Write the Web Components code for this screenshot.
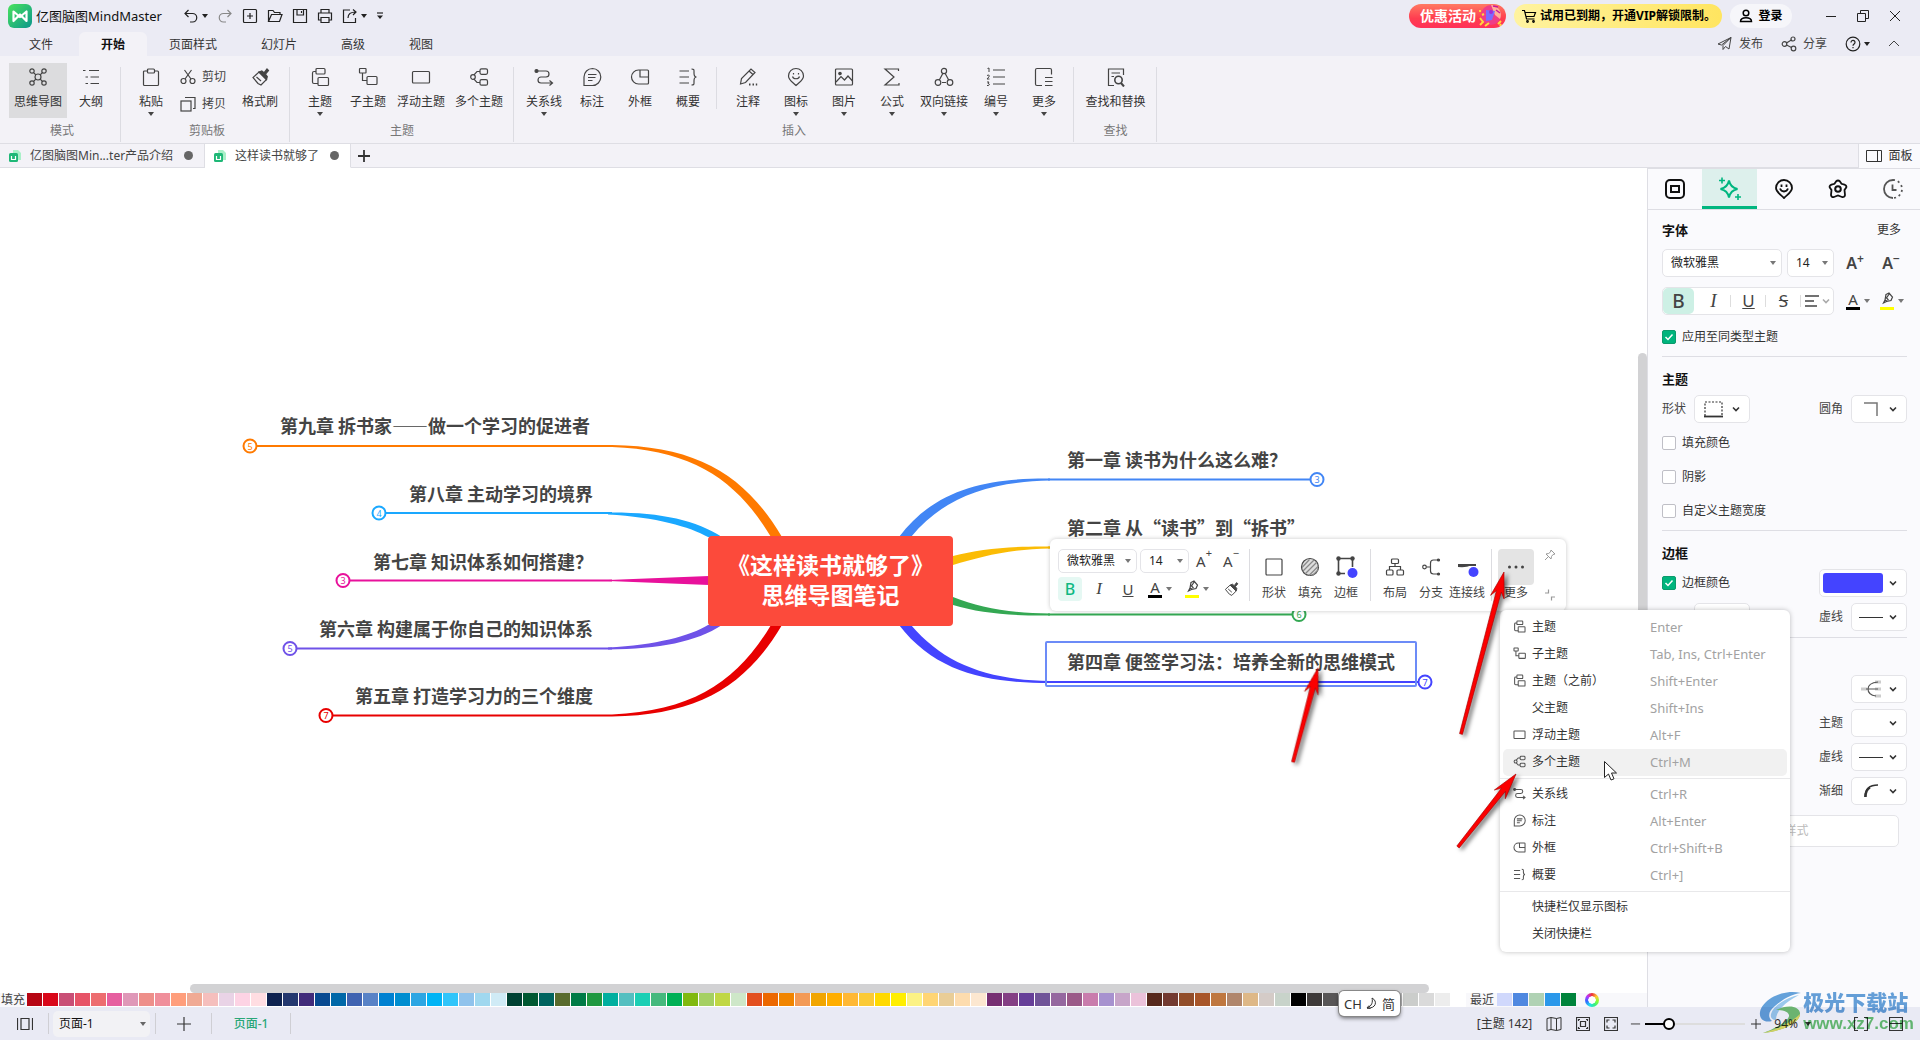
<!DOCTYPE html>
<html lang="zh-CN">
<head>
<meta charset="utf-8">
<title>亿图脑图MindMaster</title>
<style>
html,body{margin:0;height:100%}
body{font:12px/16px "Noto Sans","Noto Sans CJK SC",sans-serif;color:#333;overflow:hidden}
</style>
</head>
<body>
<mind-app></mind-app>
<script>
const ICONS = {
  logo:['24','<defs><linearGradient id="g" x1="0" y1="0" x2="1" y2="1"><stop offset="0" stop-color="#4be35d"/><stop offset="1" stop-color="#0a968c"/></linearGradient></defs><rect width="24" height="24" rx="6" fill="url(#g)" stroke="none"/><path d="M5.500 17V7.500L12 13l6.500-5.500V17L12 10.500z" fill="none" stroke="#fff" stroke-width="2.200" stroke-linejoin="round"/>'],
  undo:['16','<path d="M5.500 2 2 5.500 5.500 9M2 5.500h7.500a4 4 0 0 1 0 8.500H7"/>'],
  redo:['16','<path d="m10.500 2 3.500 3.500L10.500 9M14 5.500H6.500a4 4 0 0 0 0 8.500H9" stroke="#888"/>'],
  newf:['16','<rect x="1.500" y="1.500" width="13" height="13" rx="1"/><path d="M8 5v6M5 8h6"/>'],
  open:['16','<path d="M1.500 13.500v-11h4.500l1.500 2h5.500v2M1.500 13.500h11l2.500-7H4.500z"/>'],
  save:['16','<path d="M1.500 1.500h13v13h-13zM5 1.500v5.500h6.500V1.500M9.500 3v2"/>'],
  print:['16','<path d="M4 5V1.500h8V5M4 12H1.500V5h13v7H12M4 9.500h8v5H4z"/>'],
  exp:['16','<path d="M8 2H1.500v12.500h12V10M6 10c0-4 2.500-6 8-6M11 1.500 14 4l-3 3"/>'],
  caret:['6','<path d="M0 1h6L3 5z" fill="currentColor" stroke="none"/>'],
  overflow:['8','<path d="M1 1h6" /><path d="M1 3.500h6L4 7z" fill="currentColor" stroke="none"/>'],
  cart:['16','<path d="M1 2.500h2.500L5.500 11h8M4 4.500h10.500L13 8.500H5"/><circle cx="6.500" cy="13.500" r=".8"/><circle cx="12.500" cy="13.500" r=".8"/>'],
  user:['14','<circle cx="7" cy="4" r="2.800"/><path d="M1.500 12.500c0-5 11-5 11 0z"/>'],
  min:['12','<path d="M1 6.500h10" stroke-width="1"/>'],
  rest:['12','<path d="M.5 3.500h8v8h-8zM3.500 3.500v-3h8v8h-3" stroke-width="1"/>'],
  close:['12','<path d="m1 1 10 10M11 1 1 11" stroke-width="1"/>'],
  plane:['16','<path d="M1 8 14 1.500 12 13 8.500 10.500 6 13.500V9.500L14 1.500 4.500 9z" stroke-width="1"/>'],
  share:['16','<circle cx="3.500" cy="8" r="2.300"/><circle cx="12" cy="3" r="2"/><circle cx="12.500" cy="12.500" r="2.300"/><path d="m5.500 7 4.800-3M5.500 9l5 2.500"/>'],
  help:['16','<circle cx="8" cy="8" r="6.800"/><path d="M6 6.500c0-3 4.300-2.500 4 0C10 8 8 8 8 9.800M8 11v1.200"/>'],
  up:['12','<path d="m1 8 5-5 5 5" stroke-width="1"/>'],
  down:['8','<path d="m1 2.500 3 3 3-3" stroke-width="1.600"/>'],
  mind:['20','<circle cx="10" cy="10" r="3"/><circle cx="4" cy="4" r="2.200"/><circle cx="16" cy="4" r="2.200"/><circle cx="4" cy="16" r="2.200"/><circle cx="16" cy="16" r="2.200"/><path d="m5.500 5.500 2.300 2.300M14.500 5.500l-2.300 2.300M5.500 14.500l2.300-2.300M14.500 14.500l-2.300-2.300"/>'],
  outline:['20','<path d="M2 3.500h2.500M8 3.500h10M4.500 10H7M9.500 10H18M4.500 16.500H7M9.500 16.500H18"/>'],
  paste:['20','<path d="M6.500 4h-3q-1 0-1 1v12.500q0 1 1 1h13q1 0 1-1V5q0-1-1-1h-3"/><rect x="6.500" y="2" width="7" height="4" rx="1"/>'],
  cut:['16','<circle cx="3.500" cy="12" r="2.500"/><circle cx="12.500" cy="12" r="2.500"/><path d="M5 10 11.500 1M11 10 4.500 1"/>'],
  copy:['16','<rect x="1" y="5" width="10" height="10"/><path d="M5 1.500h10v11h-2"/>'],
  brush:['20','<path d="m9 5 7.500 7.500-5.500 5.500-3-1.500L3 10.500z"/><path d="m9 5 2.800-1 2.200 1.800L17 2l1.500 1.500-3 3.500 1.800 2.500-.8 3z" fill="currentColor"/><path d="m6.500 10 4.500 4"/>'],
  topic:['20','<rect x="6" y="1.500" width="9" height="5.500" rx="1"/><rect x="8" y="10.500" width="10.500" height="8" rx="1"/><path d="M6 4.500H4Q2.500 4.500 2.500 6v9q0 1.500 1.500 1.500h4"/>'],
  sub:['20','<rect x="1.500" y="1.500" width="6.500" height="4.500" rx=".5"/><rect x="9" y="9.500" width="10" height="8" rx="1"/><path d="M4.500 6v7.500H9"/>'],
  float:['20','<rect x="1.500" y="4.500" width="17" height="11.500" rx="1"/>'],
  multi:['20','<circle cx="4" cy="10" r="2.300"/><rect x="11" y="1.800" width="7.500" height="5.500" rx="1.500"/><rect x="11" y="12.700" width="7.500" height="5.500" rx="1.500"/><path d="M5 7.900 8 4.500h3M5 12.100l3 3.400h3"/>'],
  rel:['20','<circle cx="2.500" cy="4" r="1.500" fill="currentColor"/><path d="M2.500 4H12a3 3 0 0 1 0 6H7a3 3 0 0 0 0 6h11m-2.500-2.500L18.500 16 15.500 18.500"/>'],
  callout:['20','<path d="M10.500 1.500a8.300 8.500 0 0 1 0 17H2V10a8.500 8.500 0 0 1 8.500-8.500zM6 7.500h8.500M6 10.500h7.500M6 13.500h4.500"/>'],
  bound:['20','<path d="M8.500 3h9q1 0 1 1v12q0 1-1 1h-9a7 7 0 0 1 0-14zM10 3v7h8.500"/>'],
  summary:['20','<path d="M1.500 4H11M1.500 10H11M1.500 16H11M13.500 2c3 0 2.500 1 2.500 4 0 2 .5 4 2.500 4-2 0-2.500 2-2.500 4 0 3 .5 4-2.500 4"/>'],
  note:['20','<path d="m2.500 17 1-5.500L13 2l4 3.500-9.500 10zM11 4l4 3.500"/><path d="M11 17.500h1.500M14.500 17.500H16M17.800 17.500h1.400" stroke-width="2"/>'],
  face:['20','<path d="M10 1.500A7.500 7.500 0 0 1 17.500 9c0 4-4 6-7.500 9.500C6.500 15 2.500 13 2.500 9A7.500 7.500 0 0 1 10 1.500zM7.500 6v1.500M12.500 6v1.500M6.500 9.500c1 3 6 3 7 0"/>'],
  image:['20','<rect x="1.500" y="2" width="17" height="16" rx="1"/><circle cx="6" cy="6.500" r="1.200" fill="currentColor"/><path d="m2 15 5-5.500 3.500 3.500L14 9l4.500 5"/>'],
  sigma:['20','<path d="M16.500 4V2H3l9 8-9 8h14v-2"/>'],
  bilink:['20','<circle cx="10" cy="4" r="2.600"/><circle cx="4" cy="15.500" r="2.800"/><circle cx="16" cy="15.500" r="2.800"/><path d="M8.800 6.500 5.300 13M11.200 6.500l3.500 6.500M8 15.500h4"/>'],
  number:['20','<path d="M1.500 1.500 3 1v4M1 8.500c2-1 3 0 1.800 1.500L1 12h2.500M1 15h2L2 16.500c2 0 2 2.500-1 2" stroke-width="1"/><path d="M7 3h12M7 10h12M7 17h12"/>'],
  more:['20','<path d="M17.500 7.500V3q0-1.500-1.500-1.500H3Q1.500 1.500 1.500 3v14q0 1.500 1.500 1.500h5M11 10.500h7.500M11 14.500h7.500M11 18.500h7.500"/>'],
  find:['20','<path d="M17.500 8V2h-15v16.500H8M5.500 6H14M5.500 9.500H8"/><circle cx="12.500" cy="13" r="3.700" stroke-width="1.600"/><path d="m15 16 3 3.500" stroke-width="2"/>'],
  doc:['12','<path d="M4 0h5l3 3v7H4z" fill="#a9f0c8" stroke="none"/><rect x="0" y="3" width="9" height="9" rx="1.500" fill="#1fb877" stroke="none"/><path d="M2.500 6v3.500h4V6" stroke="#fff"/>'],
  panel:['16','<path d="M.5 2.500h15v11H.5zM11.500 2.500v11" stroke-width="1"/>'],
  plus:['12','<path d="M6 0v12M0 6h12"/>'],
  t1:['20','<rect x="1" y="1" width="18" height="18" rx="4" stroke-width="2"/><rect x="6" y="7" width="8" height="6" stroke-width="2"/>'],
  t2:['24','<path d="M11 3.500c1 5 3.500 7.500 8.500 8.500-5 1-7.500 3.500-8.500 8.500-1-5-3.500-7.500-8.500-8.500 5-1 7.500-3.500 8.500-8.500z" stroke-width="2"/><path d="M4 .5v6M1 3.500h6M20 17v6M17 20h6" stroke-width="1.600"/>'],
  t3:['20','<path d="M10 1A8 8 0 0 1 18 9c0 4-4 6-8 10C6 15 2 13 2 9A8 8 0 0 1 10 1zM7.500 5.500V8M12.500 5.500V8M6 9.500c1.500 4 6.500 4 8 0" stroke-width="1.800"/>'],
  t4:['20','<path d="M8 2.500q2-2 4 0l1.500 2.300 3 .8q2.500 1 1.700 3L16.500 11l.5 5q-.5 2.500-3 2L10 16.500 6 18q-2.500.5-3-2l.5-5L1.800 8.600q-.8-2 1.700-3l3-.8z" stroke-width="1.800"/><circle cx="10" cy="10" r="2.800" stroke-width="2"/>'],
  t5:['20','<path d="M10 1a9 9 0 0 0 0 18M9.500 5.500V11h4" stroke="#555" stroke-width="1.800"/><path d="M10 1a9 9 0 0 1 0 18" stroke="#555" stroke-width="1.800" stroke-dasharray="2 3"/>'],
  alignl:['16','<path d="M1 3h14M1 8h9M1 13h12" stroke-width="1.600"/>'],
  hl:['14','<path d="M6 2.500 9 1l3.500 4L11 8.500 6.500 9.500 3.500 11l1.500-3zM5 8l2.500 1.500M9.500 1.500l-3 4.500 2 2"/>'],
  dots:['18','<circle cx="2.500" cy="9" r="1.500" fill="currentColor" stroke="none"/><circle cx="9" cy="9" r="1.500" fill="currentColor" stroke="none"/><circle cx="15.500" cy="9" r="1.500" fill="currentColor" stroke="none"/>'],
  square:['20','<rect x="2" y="2" width="16" height="16" rx="1"/>'],
  fill:['20','<circle cx="10" cy="10" r="8.500" fill="#ddd"/><path d="M3 14 14 3M2 10.500l7.500-8M5 17 17 5M9 18.500 18.500 9M13 18l5-5" stroke="#888"/>'],
  border:['24','<path d="M5 3.500h13M4.500 4v14M5 18.500h6M18.500 4v8" stroke-width="1.600"/><g fill="#444" stroke="none"><circle cx="4.500" cy="3.500" r="2.200"/><circle cx="18.500" cy="3.500" r="2.200"/><circle cx="4.500" cy="18.500" r="2.200"/></g><circle cx="18.500" cy="18" r="5" fill="#4444ff" stroke="none"/>'],
  layout:['20','<rect x="6.500" y="2" width="7" height="4.500" rx="1"/><rect x="1.500" y="13" width="6.500" height="5" rx="1"/><rect x="12" y="13" width="6.500" height="5" rx="1"/><path d="M10 6.500v3M4.500 13V9.500h11V13"/>'],
  branch:['20','<circle cx="3.500" cy="10" r="1.800"/><path d="M5.500 10h4M17 3h-4.500Q9.500 3 9.500 6v8q0 3 3 3H17"/><circle cx="17.500" cy="3" r="1" fill="currentColor"/><circle cx="17.500" cy="17" r="1" fill="currentColor"/>'],
  conn:['24','<path d="M3 9h18v2h-7Q12 12.500 3 12z" fill="#444" stroke="none"/><circle cx="18.500" cy="17" r="5" fill="#4444ff" stroke="none"/>'],
  pin:['12','<path d="m7 1 4 4-2 .5-1.500 2L7 10 2 5l2.500-.5L6.500 3zM4 8l-3 3" stroke-width="1"/>'],
  shrink:['12','<path d="M1 4h3.500V.5M7.500 11.500V8H11"/>'],
  shape:['20','<path d="M1 17V3h17v14" stroke-dasharray="2 1.500"/><path d="M0 17.500h19" stroke-width="1.800"/>'],
  corner:['16','<path d="M1 2h13v13" stroke="#777" stroke-width="1.500"/>'],
  line:['24','<path d="M0 12.500h24" stroke-width="1"/>'],
  tree:['20','<path d="M0 10h6M14 3h6M14 10h6M14 17h6" stroke="#ccc" stroke-width="3"/><path d="M5 10h12M17 3Q7 4 7 10q0 6 8 7" stroke="#555"/>'],
  taper:['16','<path d="M2 14C2 5 7 2 15 2" stroke-width="1.500"/><path d="M2.500 14C2.500 9 4 6 7 4.500" stroke-width="2.500"/>'],
  pages:['16','<path d="M.5 2v12M15.500 2v12M4 2.500h8v11H4z"/>'],
  map:['16','<path d="m1 2.500 4-1v12l-4 1zM5 1.500l5.500 1v12l-5.500-1M10.500 2.500l4.500-1v12l-4.500 1" stroke-width="1"/>'],
  fit:['14','<path d="M.5.500h13v13H.500zM4.500 4.500h5v5h-5zM2.500 4V2.500H4M10 2.500h1.500V4M2.500 10v1.500H4M10 11.500h1.500V10"/>'],
  full:['14','<path d="M.5.500h13v13H.500zM3 5.500V3h2.500M8.500 3H11v2.500M3 8.500V11h2.500M8.500 11H11V8.500"/>'],
  brackets:['14','<path d="M4 .5H.5V13.500H4M10 .5h3.500v13H10"/>'],
  boxmin:['14','<path d="M.5.500h13v13H.500zM1 6.500h12"/>'],
  moon:['14','<path d="M7 1c6 3 4 11-5 10 5-2 6-6 5-10zM4 8.500l-2 2.500 3.500.5" stroke-width="1"/>'],
  party:['28','<circle cx="15" cy="13" r="10" fill="#ef3d86" stroke="none"/><path d="M15 3a10 10 0 0 1 9 14l-5-4z" fill="#ffb199" stroke="none"/><path d="m10 8 9 1-3 9-6 1z" fill="#7a6bff" stroke="none"/><path d="m4 16 3 4-3 3M9 24l4-3M22 22l3-3M3 9h2M6 13l2-1M24 24l1-2" stroke="#ffd83d" stroke-width="2"/><circle cx="15" cy="10" r="2" fill="#a52bd6" stroke="none"/><path d="m17 4 5 1M20 8l4 3" stroke="#c9179b" stroke-width="1.500"/>'],
};
function define(name, markup, init) {
  const t = document.createElement('template');
  t.innerHTML = markup;
  customElements.define(name, class extends HTMLElement {
    constructor() { super(); this.attachShadow({mode:'open'}); }
    connectedCallback() {
      if (this.ready) return;
      this.ready = true;
      this.shadowRoot.append(t.content.cloneNode(true));
      if (init) init.call(this, this.shadowRoot);
    }
  });
}
const RESET = `*{box-sizing:border-box}button,select,input{font:inherit;color:inherit;margin:0}button{border:0;background:none;padding:0;display:flex;align-items:center;justify-content:center}`;

define('mm-icon', `<style>:host{display:block;flex:none}svg{display:block;fill:none;stroke:currentColor;stroke-width:var(--w,1.2)}</style>`, function(r) {
  const [box, body] = ICONS[this.getAttribute('name')];
  const s = this.getAttribute('size') || box;
  r.innerHTML += `<svg aria-hidden="true" width="${s}" height="${s}" viewBox="0 0 ${box} ${box}">${body}</svg>`;
});

define('title-bar', `<style>${RESET}
:host{display:flex;align-items:center;height:32px;padding:0 9px 0 8px;color:#222}
h1{font-size:13px;line-height:20px;font-weight:400;margin:0 0 0 4px;width:147px;white-space:nowrap;color:#111}
.quick{display:flex;align-items:center;gap:9px}
.quick button{gap:3px}
.right{display:flex;align-items:center;gap:8px;margin-left:auto}
.pill{height:24px;border-radius:12px;font-weight:700;white-space:nowrap;color:#000}
.sale{width:97px;background:linear-gradient(#ff7a62,#ff3d50 60%,#ff3158);color:#fff;font-size:14px;justify-content:flex-start;padding-left:11px;overflow:hidden}
.vip{background:linear-gradient(90deg,#fff3a0,#ffe560);padding:0 6px 0 7px;gap:3px}
.login{background:#f6f6fa;width:62px;gap:5px}
.win{display:flex;margin-left:15px}.win button{width:32px;height:24px}
</style>
<mm-icon name="logo"></mm-icon><h1>亿图脑图MindMaster</h1>
<div class="quick">
<button aria-label="undo"><mm-icon name="undo"></mm-icon><mm-icon name="caret"></mm-icon></button>
<button aria-label="redo"><mm-icon name="redo"></mm-icon></button>
<button aria-label="new"><mm-icon name="newf"></mm-icon></button>
<button aria-label="open"><mm-icon name="open"></mm-icon></button>
<button aria-label="save"><mm-icon name="save"></mm-icon></button>
<button aria-label="print"><mm-icon name="print"></mm-icon></button>
<button aria-label="export"><mm-icon name="exp"></mm-icon><mm-icon name="caret"></mm-icon></button>
<button aria-label="customize"><mm-icon name="overflow"></mm-icon></button>
</div>
<div class="right"><button class="pill sale">优惠活动<mm-icon name="party"></mm-icon></button>
<button class="pill vip"><mm-icon name="cart"></mm-icon>试用已到期，开通VIP解锁限制。</button>
<button class="pill login"><mm-icon name="user" style="--w:1.5"></mm-icon>登录</button>
<div class="win"><button aria-label="minimize"><mm-icon name="min"></mm-icon></button><button aria-label="restore"><mm-icon name="rest"></mm-icon></button><button aria-label="close"><mm-icon name="close"></mm-icon></button></div></div>`);

define('menu-bar', `<style>${RESET}
:host{display:flex;height:24px;padding:0 20px 0 7px}
nav{display:flex}
nav a{padding:5px 22px 3px;color:#333;text-decoration:none;white-space:nowrap}
nav a:first-child{margin-right:4px}
nav a[aria-current]{background:#f3f2f7;border-radius:6px 6px 0 0;font-weight:700;color:#111}
.right{display:flex;gap:18px;margin-left:auto;color:#444}
.right button{gap:6px}.right .help{gap:3px;color:#222}
</style>
<nav><a href="#">文件</a><a href="#" aria-current="page">开始</a><a href="#">页面样式</a><a href="#">幻灯片</a><a href="#">高级</a><a href="#">视图</a></nav>
<div class="right"><button><mm-icon name="plane"></mm-icon>发布</button><button><mm-icon name="share"></mm-icon>分享</button><button class="help" aria-label="help"><mm-icon name="help"></mm-icon><mm-icon name="caret"></mm-icon></button><button aria-label="collapse"><mm-icon name="up"></mm-icon></button></div>`);

define('ribbon-button', `<style>${RESET}
:host{display:block;width:48px}
:host([wide]){width:58px}
button{flex-direction:column;justify-content:flex-start;width:100%;height:55px;padding-top:4px;white-space:nowrap;color:#333}
:host([active]) button{background:#dcdcde}
mm-icon{color:#444}
span{margin-top:7px}
.c{margin-top:1px}
</style><button><span><slot></slot></span></button>`, function(r) {
  const b = r.querySelector('button');
  b.insertAdjacentHTML('afterbegin', `<mm-icon name="${this.getAttribute('icon')}" size="20"></mm-icon>`);
  if (this.hasAttribute('drop')) b.insertAdjacentHTML('beforeend', '<mm-icon class="c" name="caret"></mm-icon>');
});

define('ribbon-group', `<style>
:host{display:flex;flex:none}
.in{padding:7px 5px 0 6px}
.row{display:flex}
.cap{display:block;margin-top:5px;text-align:center;color:#777}
i{width:1px;background:#dcdce2;margin:11px 0 1px}
</style><div class="in"><div class="row"><slot></slot></div><span class="cap"></span></div><i></i>`, function(r) {
  r.querySelector('.cap').textContent = this.getAttribute('caption');
});

define('app-ribbon', `<style>${RESET}
:host{display:flex;height:88px;background:#f3f2f7;border-bottom:1px solid #dedee4}
.col{display:flex;flex-direction:column;gap:11px;margin:6px 10px 0 8px;color:#444}
.col button{gap:6px;white-space:nowrap}
.sep{width:1px;height:42px;background:#dcdce2;margin:4px 7px 0 4px}
.link{width:56px}.find{width:71px}.paste{width:42px}.pad{padding-left:3px}
</style>
<ribbon-group class="pad" caption="模式"><ribbon-button icon="mind" wide active>思维导图</ribbon-button><ribbon-button icon="outline">大纲</ribbon-button></ribbon-group>
<ribbon-group class="pad" caption="剪贴板"><ribbon-button class="paste" icon="paste" drop>粘贴</ribbon-button>
<div class="col"><button><mm-icon name="cut"></mm-icon>剪切</button><button><mm-icon name="copy"></mm-icon>拷贝</button></div>
<ribbon-button icon="brush">格式刷</ribbon-button></ribbon-group>
<ribbon-group caption="主题"><ribbon-button icon="topic" drop>主题</ribbon-button><ribbon-button icon="sub">子主题</ribbon-button><ribbon-button icon="float" wide>浮动主题</ribbon-button><ribbon-button icon="multi" wide>多个主题</ribbon-button></ribbon-group>
<ribbon-group caption="插入"><ribbon-button icon="rel" drop>关系线</ribbon-button><ribbon-button icon="callout">标注</ribbon-button><ribbon-button icon="bound">外框</ribbon-button><ribbon-button icon="summary">概要</ribbon-button><div class="sep"></div><ribbon-button icon="note">注释</ribbon-button><ribbon-button icon="face" drop>图标</ribbon-button><ribbon-button icon="image" drop>图片</ribbon-button><ribbon-button icon="sigma" drop>公式</ribbon-button><ribbon-button class="link" icon="bilink" drop>双向链接</ribbon-button><ribbon-button icon="number" drop>编号</ribbon-button><ribbon-button icon="more" drop>更多</ribbon-button></ribbon-group>
<ribbon-group caption="查找"><ribbon-button class="find" icon="find">查找和替换</ribbon-button></ribbon-group>`);

define('doc-tabs', `<style>${RESET}
:host{display:flex;height:24px;background:#f3f2f7}
.tab{padding:0 11px 0 9px;height:24px;border-right:1px solid #dedee4;border-bottom:1px solid #dedee4;white-space:nowrap;color:#444}
.tab mm-icon{margin-right:9px}
.tab.on{background:#fff;border-bottom-color:#fff}
.dot{width:9px;height:9px;border-radius:50%;background:#666;margin-left:11px}
.rest{flex:1;border-bottom:1px solid #dedee4;display:flex;padding-left:7px}
.panel{width:62px;background:#fafafd;border-left:1px solid #dedee4;gap:6px;color:#333}
</style>
<button class="tab"><mm-icon name="doc"></mm-icon>亿图脑图Min...ter产品介绍<span class="dot"></span></button>
<button class="tab on"><mm-icon name="doc"></mm-icon>这样读书就够了<span class="dot"></span></button>
<div class="rest"><button aria-label="add"><mm-icon name="plus" style="--w:1.8"></mm-icon></button></div>
<button class="panel"><mm-icon name="panel"></mm-icon>面板</button>`);

define('topic-node', `<style>
:host{position:absolute;font:700 18px/24px "Noto Sans CJK SC",sans-serif;color:#444;white-space:nowrap}
:host([root]){font:700 23px/30px "Liberation Sans","Noto Sans CJK SC",sans-serif;color:#fff;background:#fc4a3b;border-radius:4px;display:flex;flex-direction:column;align-items:center;justify-content:center;width:245px;height:90px}
:host([selected]){border:2px solid #6c8bf7;border-radius:2px;padding:6px 20px 12px}
</style><slot></slot>`);

define('mind-map', `<style>
:host{display:block;position:relative;overflow:hidden;background:#fff}
svg{position:absolute;left:0;top:0}
.v{position:absolute;right:0;top:185px;width:9px;height:440px;border-radius:5px;background:#d2d2d4}
.h{position:absolute;left:190px;bottom:0;width:75.2%;height:9px;border-radius:5px;background:#d2d2d4}
</style><svg width="1647" height="825" viewBox="0 168 1647 825"></svg>
<topic-node style="left:280px;top:245px">第九章 拆书家——做一个学习的促进者</topic-node>
<topic-node style="left:409px;top:313px">第八章 主动学习的境界</topic-node>
<topic-node style="left:373px;top:381px">第七章 知识体系如何搭建？</topic-node>
<topic-node style="left:319px;top:448px">第六章 构建属于你自己的知识体系</topic-node>
<topic-node style="left:355px;top:515px">第五章 打造学习力的三个维度</topic-node>
<topic-node style="left:1067px;top:279px">第一章 读书为什么这么难？</topic-node>
<topic-node style="left:1067px;top:347px">第二章 从“读书”到“拆书”</topic-node>
<topic-node selected style="left:1045px;top:473px">第四章 便签学习法：培养全新的思维模式</topic-node>
<topic-node root style="left:708px;top:368px"><span>《这样读书就够了》</span><span>思维导图笔记</span></topic-node>
<div class="v"></div><div class="h"></div>`, function(r) {
  const branches = [
    ['#ff7a00','M612 445C698 446 746 476 782 537H771C738 482 695 450 612 447z',250,446,612,5],
    ['#1aa8ff','M608 512.5C660 512 696 520 722 537H708C690 527 656 517 608 514.500z',379,513,612,4],
    ['#e8119b','M608 580 709 576v9L608 581z',343,580.500,612,3],
    ['#6f52e8','M608 649.500C660 649 696 642 722 625H708C690 636 656 645 608 647.500z',290,648.500,612,5],
    ['#e80000','M612 716.500C698 715 746 686 782 625H771C738 680 695 711 612 714.500z',326,715.500,612,7],
    ['#4286f5','M899 537C936 488 988 478 1050 478.500V480.500C988 482 944 497 911 537z',1317,479.500,1048,3],
    ['#fbbc05','M953 556C980 549 1010 546 1050 546.500V548.500C1010 549 980 557 953 565z',0,547.500,1048,0],
    ['#34a853','M953 597C980 608 1010 613 1050 613.500V615.500C1010 616 980 613 953 605z',1299,614.500,1048,6],
    ['#4444ff','M899 625C936 673 988 683 1050 683V681C988 680 944 664 911 625z',1425,682,1048,7],
  ];
  r.querySelector('svg').innerHTML = branches.map(([c,d,x,y,e,n]) =>
    `<path d="${d}" fill="${c}"/>` + (n ? `<path d="M${x < e ? x+7 : x-7} ${y}H${e}" stroke="${c}" stroke-width="2"/><circle cx="${x}" cy="${y}" r="6.500" fill="#fff" stroke="${c}" stroke-width="2"/><text x="${x}" y="${y+3.5}" text-anchor="middle" font-size="9" fill="${c}">${n}</text>` : `<path d="M1048 ${y}H1100" stroke="${c}" stroke-width="2"/>`)).join('');
});

define('color-bar', `<style>
:host{display:flex;height:14px;background:#fff;align-items:flex-start;line-height:14px}
.l{width:27px;padding-left:1px;box-sizing:border-box;background:#f8f8fb;color:#444}
.s{display:flex;gap:1px}
.s i{width:15px;height:13px}
.r{display:flex;flex:1;background:#f8f8fb;padding-left:4px;height:14px;color:#444}
.r .s{margin-left:3px}
.w{width:14px;height:14px;border-radius:50%;margin-left:9px;background:radial-gradient(#fff 0 35%,transparent 40%),conic-gradient(#e33,#fc3,#8f3,#3e8,#2de,#36f,#b3f,#e33)}
</style><span class="l">填充</span><div class="s" id="p"></div><div class="r"><span>最近</span><div class="s" id="q"></div><span class="w"></span></div>`, function(r) {
  const P = 'b60513 d9071a c94f76 e75468 ed6d70 e65fa0 df98b8 ee8f8a f08f9b ff9e7c f0aa94 f5bfbd e9d3e6 fdd3e4 ffdde2 0e224f 24386f 412b7a 084a91 0068a8 4063b1 5882c6 0081d1 008ed0 2ca6e3 00b4f5 30c5fa 90c3ec a0d8ef d0ebf6 004132 005831 00645f 596b2d 007b46 209840 00af9f 54bfc0 1bcfb4 45b97d 00b055 80b90f a5d063 c0d744 cee7c8 e34f1f ec6800 f18500 f39a55 f1a500 ffae00 ffb834 fbca36 ffd900 ffee00 fcf285 ffd574 e9cd97 fddcae fce7d0 762f72 843f84 663f98 705498 95689f 9b5a88 c97cac a792cf c7a5c9 ebc2da 57291c 733a30 924e2a a85629 bf773f b0866c deb887 d4cbc7 c8d3ca 000000 3e3a39 595757 727171 898989 9fa0a0 b5b5b6 cbcdcb dadada ededed ffffff';
  const sw = s => s.split(' ').map(c => `<i style="background:#${c}"></i>`).join('');
  r.querySelector('#p').innerHTML = sw(P);
  r.querySelector('#q').innerHTML = sw('d0d8fc 4f88e0 b0d2b4 2b98ea 00843c');
});

define('drop-box', `<style>${RESET}
:host{display:grid;height:28px;width:56px;align-items:center;background:#fff;border:1px solid #e4e4e8;border-radius:5px}
:host([w="font"]){width:120px}:host([w="size"]){width:47px}:host([w="color"]){width:88px}
:host([w="qfont"]){width:79px;height:24px}:host([w="qsize"]){width:49px;height:24px}
:host>*{grid-area:1/1}
select,.p,.c{grid-area:1/1}
select{appearance:none;border:0;background:none;width:100%;height:100%;padding:0 0 0 8px;color:#222;outline:0}
.c{justify-self:end;margin-right:9px;pointer-events:none;color:#333}
:host([solid]) .c{margin-right:5px;color:#777}
.p{pointer-events:none;display:flex;justify-content:center;margin-right:16px;color:#333}
:host([w="color"]) .p{justify-content:flex-start;margin:0 0 0 3px}
</style><select></select><div class="p"><slot></slot></div>`, function(r) {
  const s = r.querySelector('select');
  s.setAttribute('aria-label', this.getAttribute('label') || '');
  s.innerHTML = `<option>${this.getAttribute('value') || ''}</option>`;
  const solid = this.hasAttribute('solid');
  r.querySelector('.p').insertAdjacentHTML('afterend', `<mm-icon class="c" name="${solid ? 'caret' : 'down'}"></mm-icon>`);
});

define('check-row', `<style>${RESET}
:host{display:block;height:20px}
label{display:flex;align-items:center;gap:6px;line-height:20px;color:#333}
input{appearance:none;width:14px;height:14px;border:1px solid #bfbfc6;border-radius:2px;background:#fff}
input:checked{border-color:#0c9a6c;background:#00b47d url('data:image/svg+xml,<svg xmlns="http://www.w3.org/2000/svg" viewBox="0 0 12 12"><path d="m2.500 6 2.500 2.500 4.500-5" fill="none" stroke="white" stroke-width="1.500"/></svg>')}
</style><label><input type="checkbox"><slot></slot></label>`, function(r) {
  r.querySelector('input').checked = this.hasAttribute('checked');
});

define('ink-button', `<style>${RESET}
:host{display:block}
button{gap:4px;width:30px;justify-content:flex-start;color:#444}
span{display:flex;flex-direction:column;align-items:center;width:14px;height:18px;font-size:15px;line-height:14px;border-bottom:3px solid var(--ink,#000)}
mm-icon.c{color:#777}
</style><button><span><slot></slot></span><mm-icon class="c" name="caret"></mm-icon></button>`);

define('side-panel', `<style>${RESET}
:host{display:flex;flex-direction:column;background:#fafafd;border-left:1px solid #dedee4}
.tabs{display:flex;height:42px;border-top:1px solid #dedee4;border-bottom:1px solid #dedee4}
.tabs button{flex:1;color:#111}
.tabs .on{background:#ddf0ec;color:#00b67f;border-bottom:3px solid #00b67f;padding-top:3px}
section{margin:0 13px 0 14px;padding:12px 0 9px;border-bottom:1px solid #dedee4;display:flex;flex-direction:column}
section:first-of-type{padding-top:10px}
section:last-of-type{border:0}
h2{font-size:13px;line-height:20px;font-weight:700;color:#111;margin:0}
.row{display:flex;align-items:center;height:28px;margin-top:6px;color:#444}
.row drop-box{flex:none}
.row .gap{margin-left:auto}
.head{display:flex;justify-content:space-between;padding-right:6px;line-height:20px;color:#333}
.head+.row{margin-top:9px}
.lab{width:32px}
.bar{display:flex;align-items:center;width:172px;height:28px;border:1px solid #e4e4e8;border-radius:5px;background:#fff;font-size:17px;line-height:20px;color:#444}
.bar button{width:35px;height:100%;background:linear-gradient(#ddd,#ddd) no-repeat right/1px 12px}
.bar .b{width:31px;background:#cdf0e5;border-radius:5px;margin-right:2px;font-size:19px;font-weight:500}
.bar .al{background:none;flex:1;gap:2px}.bar .al mm-icon+mm-icon{color:#aaa}
.bar i{font-family:"Liberation Serif",serif;font-size:19px}
.aa{width:20px;font-size:16px;font-weight:600;color:#444}
.aa sup{font-size:12px;line-height:8px;align-self:flex-start}
check-row+check-row{margin-top:14px}
.sw{display:block;width:60px;height:20px;border-radius:3px;background:#4444ff}
.ghost{height:32px;margin:10px 8px 0 0;border:1px solid #e4e4e8;border-radius:5px;background:#fff;color:#bbb;padding-left:32px}
.last{padding-top:37px}
</style>
<div class="tabs"><button aria-label="page"><mm-icon name="t1"></mm-icon></button><button class="on" aria-label="style"><mm-icon name="t2"></mm-icon></button><button aria-label="mark"><mm-icon name="t3"></mm-icon></button><button aria-label="clipart"><mm-icon name="t4"></mm-icon></button><button aria-label="history"><mm-icon name="t5"></mm-icon></button></div>
<section><div class="head"><h2>字体</h2><span>更多</span></div>
<div class="row"><drop-box w="font" solid value="微软雅黑" label="font"></drop-box><drop-box w="size" solid value="14" label="size" style="margin-left:5px"></drop-box><button class="aa" style="margin-left:11px">A<sup>+</sup></button><button class="aa" style="margin-left:16px">A<sup>−</sup></button></div>
<div class="row" style="margin-top:10px"><div class="bar"><button class="b">B</button><button><i>I</i></button><button><u>U</u></button><button><s>S</s></button><button class="al" aria-label="align"><mm-icon name="alignl"></mm-icon><mm-icon name="down"></mm-icon></button></div><ink-button style="margin-left:12px">A</ink-button><ink-button style="margin-left:4px;--ink:#ff0"><mm-icon name="hl"></mm-icon></ink-button></div>
<check-row checked style="margin-top:12px">应用至同类型主题</check-row></section>
<section><h2>主题</h2><div class="row"><span class="lab">形状</span><drop-box label="shape"><mm-icon name="shape"></mm-icon></drop-box><span class="lab gap">圆角</span><drop-box label="corner"><mm-icon name="corner"></mm-icon></drop-box></div>
<check-row style="margin-top:10px">填充颜色</check-row><check-row>阴影</check-row><check-row>自定义主题宽度</check-row></section>
<section style="padding-bottom:6px"><h2>边框</h2><div class="row"><check-row checked>边框颜色</check-row><drop-box class="gap" w="color" label="color"><span class="sw"></span></drop-box></div>
<div class="row"><span class="lab"></span><drop-box label="weight"></drop-box><span class="lab gap">虚线</span><drop-box label="dash"><mm-icon name="line"></mm-icon></drop-box></div></section>
<section class="last"><div class="row" style="margin-top:0"><drop-box class="gap" label="branch"><mm-icon name="tree"></mm-icon></drop-box></div>
<div class="row"><span class="lab gap">主题</span><drop-box label="theme"></drop-box></div>
<div class="row"><span class="lab gap">虚线</span><drop-box label="dash"><mm-icon name="line"></mm-icon></drop-box></div>
<div class="row"><span class="lab gap">渐细</span><drop-box label="taper"><mm-icon name="taper"></mm-icon></drop-box></div>
<button class="ghost" disabled>样式</button></section>`);

define('tool-tile', `<style>${RESET}
:host{display:block;width:36px}
button{flex-direction:column;width:100%;white-space:nowrap;color:#444}
div{width:36px;height:36px;display:grid;place-items:center;border-radius:4px}
:host([active]) div{background:#e4e4e4}
</style><button><div></div><slot></slot></button>`, function(r) {
  r.querySelector('div').innerHTML = `<mm-icon name="${this.getAttribute('icon')}"></mm-icon>`;
});

define('quick-toolbar', `<style>${RESET}
:host{position:absolute;display:flex;height:72px;padding:10px 8px;background:#fff;border-radius:6px;box-shadow:0 0 4px rgba(0,0,0,.22);color:#444}
.rows{display:flex;flex-direction:column;gap:4px}
.r{display:flex;gap:3px;height:24px;align-items:center}
.r+.r{gap:5px}
.r button{width:24px;height:24px;font-size:15px}
.r .b{background:#e5f8f3;color:#0fb883;border-radius:4px;font-weight:500;font-size:16px}
.r i{font-family:"Liberation Serif",serif;font-size:17px}
sup{font-size:11px;line-height:8px;align-self:flex-start}
ink-button{padding-left:3px;width:32px}
hr{width:1px;border:0;background:#dcdce0;margin:0 6px}
.e{display:flex;flex-direction:column;justify-content:space-between;align-items:center;width:16px;margin-left:8px;color:#999}
</style>
<div class="rows"><div class="r"><drop-box w="qfont" solid value="微软雅黑" label="font"></drop-box><drop-box w="qsize" solid value="14" label="size"></drop-box><button>A<sup>+</sup></button><button>A<sup>−</sup></button></div>
<div class="r"><button class="b">B</button><button><i>I</i></button><button><u>U</u></button><ink-button>A</ink-button><ink-button style="--ink:#ff0"><mm-icon name="hl"></mm-icon></ink-button><button aria-label="format painter"><mm-icon name="brush" size="16"></mm-icon></button></div></div><hr>
<tool-tile icon="square">形状</tool-tile><tool-tile icon="fill">填充</tool-tile><tool-tile icon="border">边框</tool-tile><hr>
<tool-tile icon="layout">布局</tool-tile><tool-tile icon="branch">分支</tool-tile><tool-tile icon="conn">连接线</tool-tile><hr>
<tool-tile icon="dots" active>更多</tool-tile><div class="e"><mm-icon name="pin"></mm-icon><mm-icon name="shrink"></mm-icon></div>`);

define('menu-row', `<style>${RESET}
:host{display:block;margin:0 3px}
button{display:grid;grid-template-columns:19px 118px 1fr;width:100%;height:27px;padding:0 0 2px 10px;border-radius:5px;text-align:left;align-items:center;justify-content:start;color:#333;white-space:nowrap}
:host([hover]) button{background:#f1f1f1}
kbd{font:inherit;font-size:13px;color:#a2a2a2}
mm-icon{color:#555}
</style><button><span id="i"></span><slot></slot><kbd></kbd></button>`, function(r) {
  const n = this.getAttribute('icon');
  if (n) r.querySelector('#i').innerHTML = `<mm-icon name="${n}" size="13" style="--w:1.6"></mm-icon>`;
  r.querySelector('kbd').textContent = this.getAttribute('key') || '';
});

define('context-menu', `<style>
:host{position:absolute;display:block;width:290px;box-sizing:border-box;padding:4px 0;background:#fff;border-radius:6px;box-shadow:0 0 5px rgba(0,0,0,.25)}
hr{border:0;height:1px;background:#e8e8ea;margin:2px 0}
</style>
<menu-row icon="topic" key="Enter">主题</menu-row><menu-row icon="sub" key="Tab, Ins, Ctrl+Enter">子主题</menu-row><menu-row icon="topic" key="Shift+Enter">主题（之前）</menu-row><menu-row key="Shift+Ins">父主题</menu-row><menu-row icon="float" key="Alt+F">浮动主题</menu-row><menu-row icon="multi" key="Ctrl+M" hover>多个主题</menu-row><hr>
<menu-row icon="rel" key="Ctrl+R">关系线</menu-row><menu-row icon="callout" key="Alt+Enter">标注</menu-row><menu-row icon="bound" key="Ctrl+Shift+B">外框</menu-row><menu-row icon="summary" key="Ctrl+]">概要</menu-row><hr>
<menu-row>快捷栏仅显示图标</menu-row><menu-row>关闭快捷栏</menu-row>`);

define('pointer-marks', `<style>:host{position:absolute;left:0;top:0;pointer-events:none}svg{display:block}g{filter:drop-shadow(3px 2px 2px rgba(0,0,0,.55))}</style>
<svg width="1647" height="825" viewBox="0 168 1647 825"><g></g><path d="M1604.500 761.500v16l4-3.500 2.500 6 3-1.200-2.500-5.800h5z" fill="#fff" stroke="#222"/></svg>`, function(r) {
  const arrow = (tx,ty,x,y) => {
    const L = Math.hypot(tx-x,ty-y), a = Math.atan2(ty-y,tx-x)*180/Math.PI;
    return `<path transform="translate(${x} ${y}) rotate(${a})" d="M0-1.500 ${L-20}-2.500 ${L-26}-7 ${L} 0 ${L-26} 7 ${L-20} 2.500 0 1.500z" fill="#fb0000" stroke="#a00" stroke-width=".6"/>`;
  };
  r.querySelector('g').innerHTML = arrow(1318,668,1293,762) + arrow(1504,572,1461,734) + arrow(1516,774,1458,847);
});

define('status-bar', `<style>${RESET}
:host{display:flex;align-items:center;height:33px;padding:0 17px;background:#e9eaf4;color:#333}
hr{width:1px;height:21px;border:0;background:#cfcfd4;margin:0}
.pick{display:grid;align-items:center;width:97px;height:26px;margin:0 5px 0 4px;background:#f2f2f5;border-radius:5px}
.pick>*{grid-area:1/1}
.pick select{appearance:none;border:0;background:none;height:26px;padding:0 6px;color:#111}
.pick mm-icon{justify-self:end;margin-right:4px;color:#666;pointer-events:none}
.add{width:55px}.pg{width:78px;color:#2aa778;font-weight:500}
.right{display:flex;align-items:center;margin-left:auto}
input{appearance:none;width:100px;height:12px;background:linear-gradient(90deg,#000 24px,#ddd 24px) no-repeat center/100% 2px;margin:0 6px 0 4px}
input::-webkit-slider-thumb{appearance:none;width:12px;height:12px;border:2px solid #000;border-radius:50%;background:#fff}
</style>
<button aria-label="pages"><mm-icon name="pages"></mm-icon></button><hr style="margin-left:15px">
<label class="pick"><select aria-label="page"><option>页面-1</option></select><mm-icon name="caret"></mm-icon></label><hr>
<button class="add" aria-label="add page"><mm-icon name="plus" size="14" style="--w:1"></mm-icon></button><hr><button class="pg">页面-1</button><hr>
<div class="right"><span>[主题 142]</span>
<button aria-label="overview" style="margin-left:14px"><mm-icon name="map"></mm-icon></button>
<button aria-label="fit" style="margin-left:14px"><mm-icon name="fit"></mm-icon></button>
<button aria-label="full" style="margin-left:14px"><mm-icon name="full"></mm-icon></button>
<button aria-label="zoom out" style="margin-left:12px"><mm-icon name="min" size="11"></mm-icon></button>
<input type="range" aria-label="zoom" min="0" max="100" value="20">
<button aria-label="zoom in"><mm-icon name="plus" size="10"></mm-icon></button>
<span style="margin-left:13px">94%</span><mm-icon name="caret" style="margin-left:7px"></mm-icon>
<button aria-label="focus" style="margin-left:43px"><mm-icon name="brackets"></mm-icon></button>
<button aria-label="hide" style="margin-left:21px"><mm-icon name="boxmin"></mm-icon></button></div>`);

define('ime-badge', `<style>
:host{position:absolute;display:flex;align-items:center;gap:3px;justify-content:center;width:61px;height:25px;background:#fff;border-radius:5px;box-shadow:0 0 0 1px #888,0 2px 4px rgba(0,0,0,.6);font-size:13px;color:#333}
</style><span>CH</span><mm-icon name="moon"></mm-icon><span>简</span>`);

define('site-mark', `<style>
:host{position:absolute;right:6px;bottom:6px;display:flex;align-items:center;gap:1px;pointer-events:none;opacity:.85;mix-blend-mode:multiply;font-weight:700;white-space:nowrap}
svg{display:block}
.t{display:flex;flex-direction:column;align-items:flex-start}
b{font-size:21px;line-height:24px;color:#4a90d2}
span{font:700 17px/20px "Liberation Sans",sans-serif;color:#4fb95c}
</style><svg width="43" height="44" viewBox="0 0 43 44"><path d="M42 3C24-1 4 9 1 22c-1 7 4 11 12 9-5-5-3-10 3-15C24 9 33 4 42 3z" fill="#4a94d6"/><path d="M40 5C26 8 14 16 12 24c-1 4 2 6 5 6 0-9 8-17 23-25z" fill="#8cc4ec"/><path d="M17 20c12-6 23-4 24 3 1 9-17 18-37 20 14-5 27-13 26-18-1-4-7-5-13-5z" fill="#5cb85c"/><path d="M41 24c0 8-15 17-37 19 15-4 29-11 37-19z" fill="#e2df4a"/></svg>
<div class="t"><b>极光下载站</b><span>www.xz7.com</span></div>`);

define('mind-app', `<style>
*{box-sizing:border-box}
:host{display:flex;flex-direction:column;height:100vh;background:#ebebf4;position:relative}
main{flex:1;display:flex;position:relative;min-height:0}
.work{flex:1;display:flex;flex-direction:column;min-width:0}
mind-map{flex:1}
side-panel{width:273px;flex:none}
</style>
<title-bar></title-bar><menu-bar></menu-bar><app-ribbon></app-ribbon><doc-tabs></doc-tabs>
<main><div class="work"><mind-map></mind-map><color-bar></color-bar></div><side-panel></side-panel>
<quick-toolbar style="left:1050px;top:371px"></quick-toolbar>
<context-menu style="left:1500px;top:442px"></context-menu>
<ime-badge style="left:1339px;top:823px"></ime-badge>
<pointer-marks></pointer-marks></main>
<status-bar></status-bar><site-mark></site-mark>`);
</script>
</body>
</html>
